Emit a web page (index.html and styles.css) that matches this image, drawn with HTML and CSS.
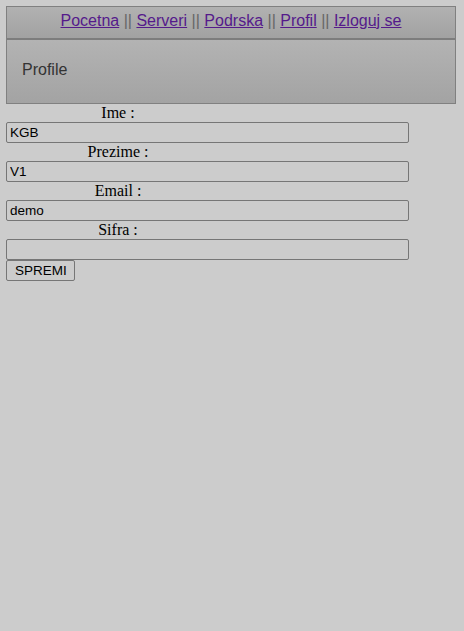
FILE: index.html
```html
<!DOCTYPE html>
<html>
<head>
<meta charset="utf-8">
<link rel="stylesheet" href="styles.css">
</head>
<body>
<div class="header">
  <div class="nav">
    <a href="#">Pocetna</a> || <a href="#">Serveri</a> || <a href="#">Podrska</a> || <a href="#">Profil</a> || <a href="#">Izloguj se</a>
  </div>
  <div class="title">Profile</div>
</div>
<form class="form">
  <label class="lbl">Ime :</label>
  <input class="field" type="text" value="KGB">
  <label class="lbl">Prezime :</label>
  <input class="field" type="text" value="V1">
  <label class="lbl">Email :</label>
  <input class="field" type="text" value="demo">
  <label class="lbl">Sifra :</label>
  <input class="field" type="password" value="">
  <button class="btn" type="button">SPREMI</button>
</form>
</body>
</html>
```
FILE: styles.css
```css
html, body {
  background: #cccccc;
}
body {
  margin: 6px;
  font-family: "Liberation Serif", "Times New Roman", serif;
  font-size: 16px;
}
.header {
  width: 448px;
  border: 1px solid #808080;
  font-family: "Liberation Sans", Arial, sans-serif;
}
.nav {
  text-align: center;
  color: #666666;
  background: linear-gradient(#b1b1b1, #a2a2a2);
  padding: 5px 0 8px;
  line-height: 18px;
  border-bottom: 2px solid #7d7d7d;
}
.nav a {
  color: #551a8b;
}
.title {
  background: linear-gradient(#b3b3b3, #a3a3a3);
  color: #333333;
  padding: 21px 15px 24px;
  line-height: 18px;
}
.form {
  margin: 0;
}
.lbl {
  display: block;
  width: 224px;
  text-align: center;
  line-height: 18px;
}
.field {
  display: block;
  box-sizing: border-box;
  width: 403px;
  height: 21px;
  margin: 0;
  padding: 1px 3px;
  border: 1px solid #767676;
  border-radius: 2px;
  background: #cccccc;
  color: #000;
  font-family: "Liberation Sans", Arial, sans-serif;
  font-size: 13.5px;
}
.btn {
  display: block;
  box-sizing: border-box;
  height: 21px;
  margin: 0;
  padding: 1px 7px 1px 8px;
  border: 1px solid #767676;
  border-radius: 2px;
  background: #cccccc;
  color: #000;
  font-family: "Liberation Sans", Arial, sans-serif;
  font-size: 13.5px;
}
```
